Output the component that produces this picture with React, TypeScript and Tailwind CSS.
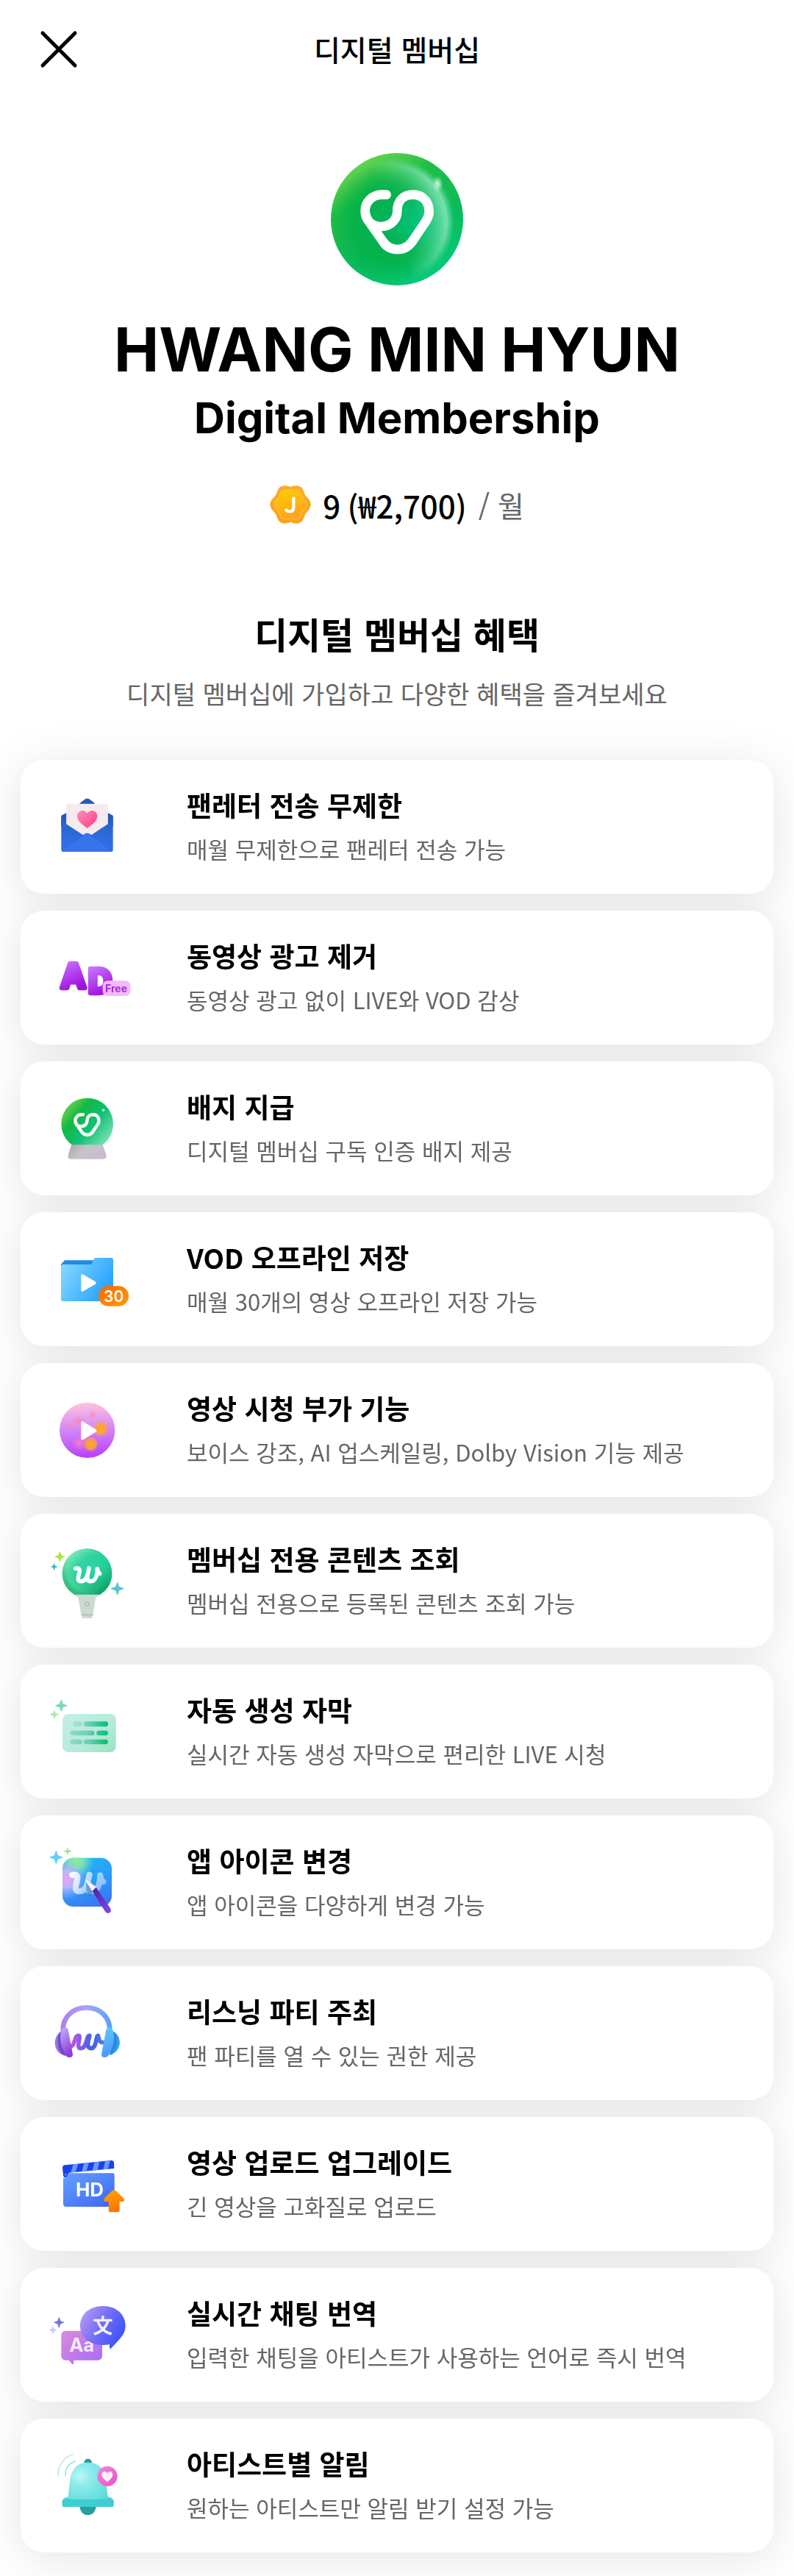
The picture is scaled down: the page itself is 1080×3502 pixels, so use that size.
import type { ReactNode } from 'react'

// Weverse-style heart mark, drawn on a 660 unit grid around (330, 335)
const HEART_MARK =
  'M287 224H268C228 224 200 254 200 290C200 330 230 354 264 354C310 354 331 320 331 290C331 250 355 224 395 224C440 224 461 258 461 292C461 308 456 320 448 332L394 412C378 436 358 447 333 447C305 447 286 436 272 414L212 328C204 316 200 305 200 290'

const W_MARK =
  'M188 847C201 843 207 850 204 862L200 880C197 895 202 899 210 899C226 899 234 888 238 868L243 846L238 868C232 894 240 899 250 899C268 899 277 878 277 848C279 860 283 866 287 868'

function Stop({ at, color, opacity = 1 }: { at: number; color: string; opacity?: number }) {
  return <stop offset={at} stopColor={color} stopOpacity={opacity} />
}

function Sparkle({ x, y, r, fill }: { x: number; y: number; r: number; fill: string }) {
  return (
    <path
      transform={`translate(${x} ${y}) scale(${r / 10})`}
      d="M0-10C1-10 2-4 3-3C4-2 10-1 10 0C10 1 4 2 3 3C2 4 1 10 0 10C-1 10-2 4-3 3C-4 2-10 1-10 0C-10-1-4-2-3-3C-2-4-1-10 0-10Z"
      fill={fill}
    />
  )
}

function Icon({ top, children }: { top: number; children: ReactNode }) {
  return (
    <svg className="size-[120px] shrink-0" viewBox={`54 ${top} 360 360`} aria-hidden="true">
      {children}
    </svg>
  )
}

function LetterIcon() {
  return (
    <Icon top={72}>
      <defs>
        <linearGradient id="letterHeart" x1="0" y1="0" x2="1" y2="1">
          <Stop at={0} color="#ff8fc4" />
          <Stop at={0.9} color="#fb4380" />
        </linearGradient>
        <linearGradient id="letterFront" x1="0" y1="0" x2="0" y2="1">
          <Stop at={0} color="#2762c8" />
          <Stop at={1} color="#3371ea" />
        </linearGradient>
      </defs>
      <path d="M130 212L228 139Q236 134 244 139L341 212V250H130Z" fill="#2459b5" />
      <path d="M125 130H205L205 159L130 212Z" fill="#fff" />
      <path d="M346 130H266L266 159L341 212Z" fill="#fff" />
      <path d="M130 206L151 195V250H130ZM341 206L320 195V250H341Z" fill="#2459b5" />
      <path d="M151 164Q151 158 157 158H314Q320 158 320 164V300H151Z" fill="#f5ebee" />
      <path d="M130 212L151 241L220 285H250L320 241L341 212V345Q341 354 332 354H139Q130 354 130 345Z" fill="url(#letterFront)" />
      <path d="M151 240L222 287H250L320 240V200H151Z" fill="#f5ebee" />
      <path d="M132 350L226 281Q236 274 246 281L340 350Q337 354 332 354H139Q134 354 132 350Z" fill="#3674ec" />
      <path d="M132 350L226 281M340 350L246 281" stroke="#2a60cc" strokeWidth="2" />
      <path d="M236 257C210 240 195 225 195 208C195 184 226 178 236 198C246 178 277 184 277 208C277 225 262 240 236 257Z" fill="url(#letterHeart)" />
    </Icon>
  )
}

function AdFreeIcon() {
  return (
    <Icon top={687}>
      <defs>
        <linearGradient id="adFill" x1="0" y1="0" x2="0.3" y2="1">
          <Stop at={0.1} color="#cc7dff" />
          <Stop at={0.9} color="#a112e0" />
        </linearGradient>
      </defs>
      <g className="font-['Inter',sans-serif] font-bold" fill="url(#adFill)" stroke="url(#adFill)" strokeWidth="19" strokeLinejoin="round">
        <text x="128" y="908" fontSize="136">A</text>
        <text x="240" y="931" fontSize="134">D</text>
      </g>
      <rect x="299" y="880" width="113" height="62" rx="20" fill="#f6b8ff" />
      <text className="font-['Inter',sans-serif] font-bold" x="354" y="926" fontSize="42" textAnchor="middle" fill="#a02fd6">
        Free
      </text>
    </Icon>
  )
}

function BadgeIcon() {
  return (
    <Icon top={102}>
      <defs>
        <linearGradient id="badgeBall" x1="0.1" y1="0.05" x2="0.95" y2="0.8">
          <Stop at={0} color="#80d94e" />
          <Stop at={0.3} color="#12b845" />
          <Stop at={0.6} color="#10bf72" />
          <Stop at={1} color="#7ee3b8" />
        </linearGradient>
        <linearGradient id="badgeStand" x1="0" y1="0" x2="1" y2="0.4">
          <Stop at={0} color="#aaa6ad" />
          <Stop at={0.5} color="#c6c4c6" />
          <Stop at={1} color="#c9bccf" />
        </linearGradient>
      </defs>
      <circle cx="236" cy="264" r="106" fill="url(#badgeBall)" />
      <path d="M172 349H299L313 388Q318 407 302 407H170Q153 407 159 388Z" fill="url(#badgeStand)" />
      <circle cx="302" cy="208" r="6" fill="#fff" opacity="0.6" />
      <path transform="translate(113 143) scale(0.37)" d={HEART_MARK} fill="none" stroke="#fff" strokeWidth="36" strokeLinecap="round" strokeLinejoin="round" />
    </Icon>
  )
}

function OfflineIcon() {
  return (
    <Icon top={717}>
      <defs>
        <linearGradient id="folder" x1="0" y1="0.2" x2="1" y2="0.7">
          <Stop at={0} color="#85d6ff" />
          <Stop at={1} color="#24a0ff" />
        </linearGradient>
        <linearGradient id="folderCount" x1="0" y1="0" x2="1" y2="1">
          <Stop at={0} color="#ff6500" />
          <Stop at={1} color="#ff9a00" />
        </linearGradient>
      </defs>
      <path d="M129 850V836L144 820H262V850Z" fill="#2089e4" />
      <path d="M129 846Q129 837 138 837H247Q256 837 259 825L262 816Q264 810 271 810H335Q342 810 342 817V979Q342 987 334 987H138Q129 987 129 978Z" fill="url(#folder)" />
      <path d="M211 884Q211 873 221 879L269 907Q276 912 269 917L221 946Q211 952 211 941Z" fill="#fff" />
      <rect x="282" y="925" width="123" height="82" rx="41" fill="url(#folderCount)" />
      <text className="font-['Inter',sans-serif] font-semibold" x="344" y="990" fontSize="63" textAnchor="middle" fill="#fff">
        30
      </text>
    </Icon>
  )
}

function PlayerIcon() {
  return (
    <Icon top={102}>
      <defs>
        <linearGradient id="player" x1="0.5" y1="0" x2="0.55" y2="1">
          <Stop at={0} color="#ffc4dd" />
          <Stop at={0.45} color="#d58bf5" />
          <Stop at={1} color="#b83dfb" />
        </linearGradient>
        <radialGradient id="playerGold">
          <Stop at={0.2} color="#ffa51e" />
          <Stop at={0.7} color="#fda53a" opacity={0.8} />
          <Stop at={1} color="#f6a06c" opacity={0} />
        </radialGradient>
        <radialGradient id="playerPink">
          <Stop at={0} color="#ff85b4" opacity={0.8} />
          <Stop at={1} color="#ff85b4" opacity={0} />
        </radialGradient>
      </defs>
      <circle cx="236" cy="283" r="113" fill="url(#player)" />
      <circle cx="200" cy="245" r="26" fill="url(#playerPink)" />
      <circle cx="258" cy="221" r="20" fill="url(#playerPink)" />
      <circle cx="166" cy="262" r="18" fill="url(#playerPink)" />
      <circle cx="205" cy="337" r="32" fill="url(#playerPink)" />
      <circle cx="291" cy="277" r="33" fill="url(#playerGold)" />
      <circle cx="250" cy="340" r="31" fill="url(#playerGold)" />
      <path d="M211 255Q211 243 221 249L271 280Q278 285 271 290L221 321Q211 327 211 315Z" fill="#fff" />
    </Icon>
  )
}

function LightStickIcon() {
  return (
    <Icon top={717}>
      <defs>
        <radialGradient id="stickBall" cx="0.62" cy="0.45" r="0.62">
          <Stop at={0} color="#27dba9" />
          <Stop at={0.5} color="#25cf9b" />
          <Stop at={0.85} color="#45d69c" />
          <Stop at={1} color="#35bb7c" />
        </radialGradient>
        <linearGradient id="stickShine" x1="0.1" y1="0.1" x2="0.8" y2="0.9">
          <Stop at={0} color="#c4ffd9" opacity={0.6} />
          <Stop at={0.5} color="#35d49c" opacity={0} />
          <Stop at={1} color="#009355" opacity={0.7} />
        </linearGradient>
      </defs>
      <path d="M180 952H291L270 967L258 1043Q257 1050 250 1050H222Q215 1050 213 1043L199 967Z" fill="#ccdbd1" />
      <path d="M212 1036H260" stroke="#a8b8ad" strokeWidth="4" />
      <circle cx="235" cy="992" r="8" fill="none" stroke="#9fb0a5" strokeWidth="3" />
      <path d="M183 953C153 936 134 904 134 868C134 811 179 766 236 766C292 766 337 811 337 868C337 904 318 936 288 953Z" fill="url(#stickBall)" />
      <path d="M183 953C153 936 134 904 134 868C134 811 179 766 236 766C292 766 337 811 337 868C337 904 318 936 288 953Z" fill="url(#stickShine)" />
      <path d={W_MARK} fill="none" stroke="#fff" strokeWidth="17" strokeLinecap="round" strokeLinejoin="round" />
      <Sparkle x={124} y={799} r={22} fill="#a6ea38" />
      <Sparkle x={101} y={840} r={14} fill="#32b9c8" />
      <Sparkle x={359} y={929} r={26} fill="#55c5cf" />
    </Icon>
  )
}

function CaptionIcon() {
  return (
    <Icon top={132}>
      <defs>
        <linearGradient id="captionCard" x1="0" y1="0" x2="1" y2="1">
          <Stop at={0} color="#c2f1e6" />
          <Stop at={0.6} color="#b6e9dc" />
          <Stop at={1} color="#98e6b9" />
        </linearGradient>
        <linearGradient id="captionLine" gradientUnits="userSpaceOnUse" x1="170" y1="0" x2="320" y2="0">
          <Stop at={0} color="#92d9c8" />
          <Stop at={0.45} color="#6ecfb7" />
          <Stop at={0.95} color="#0cc279" />
        </linearGradient>
      </defs>
      <rect x="135" y="240" width="218" height="156" rx="23" fill="url(#captionCard)" />
      <g fill="url(#captionLine)">
        <rect x="178" y="271" width="38" height="21" rx="10" opacity="0.5" />
        <rect x="222" y="271" width="99" height="21" rx="10" />
        <rect x="166" y="308" width="100" height="20" rx="10" />
        <rect x="273" y="308" width="48" height="20" rx="10" />
        <rect x="166" y="344" width="50" height="20" rx="10" />
        <rect x="222" y="344" width="99" height="20" rx="10" />
      </g>
      <Sparkle x={130} y={206} r={25} fill="#7edbb5" />
      <Sparkle x={102} y={242} r={18} fill="#a9e9a9" />
    </Icon>
  )
}

function AppIcon() {
  return (
    <Icon top={747}>
      <defs>
        <linearGradient id="appTile" x1="0.3" y1="0" x2="0.7" y2="1">
          <Stop at={0} color="#22b5f3" />
          <Stop at={0.5} color="#2a9df8" />
          <Stop at={1} color="#3b74f3" />
        </linearGradient>
        <radialGradient id="appGreen" gradientUnits="userSpaceOnUse" cx="190" cy="840" r="75">
          <Stop at={0} color="#8ef08c" />
          <Stop at={0.4} color="#8ef0a0" opacity={0.8} />
          <Stop at={1} color="#70e0d0" opacity={0} />
        </radialGradient>
        <radialGradient id="appPink" gradientUnits="userSpaceOnUse" cx="150" cy="915" r="85">
          <Stop at={0} color="#e9a4f8" />
          <Stop at={0.4} color="#d3b3fa" opacity={0.85} />
          <Stop at={1} color="#86b4ff" opacity={0} />
        </radialGradient>
        <linearGradient id="appMark" gradientUnits="userSpaceOnUse" x1="188" y1="840" x2="280" y2="905">
          <Stop at={0} color="#fff" opacity={0.95} />
          <Stop at={1} color="#b5d8ff" opacity={0.6} />
        </linearGradient>
        <linearGradient id="appPen" x1="0" y1="0" x2="1" y2="1">
          <Stop at={0} color="#4a20a8" />
          <Stop at={1} color="#8448ef" />
        </linearGradient>
      </defs>
      <rect x="135" y="827" width="201" height="199" rx="44" fill="url(#appTile)" />
      <rect x="135" y="827" width="201" height="199" rx="44" fill="url(#appGreen)" />
      <rect x="135" y="827" width="201" height="199" rx="44" fill="url(#appPink)" />
      <path transform="translate(-66 -187) scale(1.28)" d={W_MARK} fill="none" stroke="url(#appMark)" strokeWidth="19" strokeLinecap="round" strokeLinejoin="round" />
      <path d="M232 925L232 960L250 990L258 962Z" fill="#276fa0" opacity="0.5" />
      <path d="M231 923Q229 914 238 920L272 946L257 964Z" fill="#f7f5fb" />
      <path d="M257 963L271 948Q275 951 277 955L331 1034Q336 1046 327 1051Q317 1056 310 1047Z" fill="url(#appPen)" />
      <Sparkle x={109} y={825} r={27} fill="#5fd0f8" />
      <Sparkle x={156} y={800} r={16} fill="#9de5a4" />
    </Icon>
  )
}

function HeadphoneIcon() {
  return (
    <Icon top={132}>
      <defs>
        <linearGradient id="band" x1="0" y1="0" x2="1" y2="0">
          <Stop at={0} color="#ab82ee" />
          <Stop at={0.5} color="#a9a5f6" />
          <Stop at={1} color="#5ba3f6" />
        </linearGradient>
        <linearGradient id="cupLeft" x1="0" y1="0" x2="0.4" y2="1">
          <Stop at={0} color="#c7b2fb" />
          <Stop at={1} color="#8c3ed8" />
        </linearGradient>
        <linearGradient id="cupRight" x1="0.3" y1="0" x2="0.5" y2="1">
          <Stop at={0} color="#58cdfc" />
          <Stop at={1} color="#5192fa" />
        </linearGradient>
        <linearGradient id="phoneMark" x1="0" y1="0" x2="1" y2="0">
          <Stop at={0} color="#d44ed5" />
          <Stop at={0.25} color="#8d5cf4" />
          <Stop at={0.65} color="#3f62dc" />
          <Stop at={1} color="#5779e6" />
        </linearGradient>
      </defs>
      <path d="M137 305C131 176 334 176 328 305" fill="none" stroke="url(#band)" strokeWidth="20" />
      <path d="M168 366C185 366 184 322 199 322C216 322 185 374 210 374C236 374 231 322 245 322C249 322 224 374 252 374C276 374 270 322 280 322C284 322 278 354 305 350" fill="none" stroke="url(#phoneMark)" strokeWidth="17" strokeLinecap="round" strokeLinejoin="round" />
      <path d="M134 302C94 318 91 392 146 404Z" fill="#9276e8" />
      <path d="M132 303C108 318 110 390 144 404L160 395L138 300Z" fill="#7546cf" />
      <path d="M127 315Q130 289 146 289Q158 289 159 303L177 399Q177 411 164 411Q151 411 146 398C130 370 124 342 127 315Z" fill="url(#cupLeft)" />
      <path d="M337 302C379 318 382 386 327 402Z" fill="#359ff1" />
      <path d="M339 303C366 318 363 384 329 401Z" fill="#278be0" />
      <path d="M344 315Q342 289 325 289Q314 289 312 303L294 399Q294 411 307 411Q319 411 325 398C341 370 348 342 344 315Z" fill="url(#cupRight)" />
    </Icon>
  )
}

function UploadIcon() {
  return (
    <Icon top={747}>
      <defs>
        <linearGradient id="clap" x1="0" y1="0" x2="1" y2="1">
          <Stop at={0} color="#62a1ff" />
          <Stop at={1} color="#3f63f5" />
        </linearGradient>
        <linearGradient id="upArrow" x1="0.2" y1="0" x2="0.6" y2="1">
          <Stop at={0} color="#ffa500" />
          <Stop at={1} color="#ff7000" />
        </linearGradient>
      </defs>
      <path d="M135 862Q134 851 146 850L333 831Q344 830 345 840L346 864L162 881L153 900Q140 904 138 892Z" fill="#1743ec" />
      <path d="M179 847L199 845L189 878L169 880ZM223 842L243 840L233 874L214 876ZM266 838L286 836L278 870L257 872ZM309 834L330 832L320 866L301 868Z" fill="#6a96ff" />
      <path d="M138 902H152L164 883H339Q347 883 347 891V1012Q347 1020 339 1020H150Q138 1020 138 1009Z" fill="url(#clap)" />
      <circle cx="148" cy="889" r="4" fill="#6a96ff" />
      <text className="font-['Inter',sans-serif] font-bold" x="246" y="978" fontSize="78" textAnchor="middle" fill="#fff">
        HD
      </text>
      <path d="M338 954Q345 949 352 954L384 985Q393 998 379 999H368V1035Q368 1042 361 1042H330Q323 1042 323 1035V999H311Q298 998 307 985Z" fill="url(#upArrow)" />
    </Icon>
  )
}

function TranslateIcon() {
  return (
    <Icon top={132}>
      <defs>
        <linearGradient id="bubbleBack" x1="0" y1="0" x2="1" y2="1">
          <Stop at={0} color="#da8bdc" />
          <Stop at={1} color="#a66af7" />
        </linearGradient>
        <linearGradient id="bubbleFront" x1="0" y1="0.2" x2="0.9" y2="0.7">
          <Stop at={0} color="#b79af3" />
          <Stop at={0.5} color="#766ff5" />
          <Stop at={1} color="#4055fa" />
        </linearGradient>
      </defs>
      <path d="M150 296H278Q297 296 297 315V397Q297 416 278 416H181L180 430Q179 435 174 431L161 416H150Q130 416 130 397V315Q130 296 150 296Z" fill="url(#bubbleBack)" />
      <text className="font-['Inter',sans-serif] font-bold" x="214" y="381" fontSize="76" textAnchor="middle" fill="#f7e9ff">
        Aa
      </text>
      <path d="M300 195C355 195 392 229 392 276C392 300 378 319 366 332L334 367Q327 372 327 362V351Q315 354 300 354C245 354 207 321 207 276C207 229 245 195 300 195Z" fill="url(#bubbleFront)" />
      <text className="font-['Noto_Sans_CJK_SC',sans-serif] font-bold" x="300" y="305" fontSize="82" textAnchor="middle" fill="#edf0ff">
        文
      </text>
      <Sparkle x={121} y={262} r={22} fill="#7972dc" />
      <Sparkle x={96} y={293} r={16} fill="#c9c9fa" />
    </Icon>
  )
}

function BellIcon() {
  return (
    <Icon top={747}>
      <defs>
        <radialGradient id="bellBody" cx="0.35" cy="0.3" r="0.85">
          <Stop at={0} color="#bdf8f7" />
          <Stop at={0.25} color="#8eecec" />
          <Stop at={1} color="#4cd3d5" />
        </radialGradient>
        <linearGradient id="bellHeart" x1="0" y1="0" x2="1" y2="1">
          <Stop at={0} color="#f785dd" />
          <Stop at={1} color="#e950c8" />
        </linearGradient>
      </defs>
      <path d="M117 889C115 845 140 812 178 799" fill="none" stroke="#b4efee" strokeWidth="5" strokeLinecap="round" />
      <path d="M147 887C146 855 162 836 187 828" fill="none" stroke="#96e6e6" strokeWidth="5" strokeLinecap="round" />
      <path d="M223 835Q223 818 239 818Q255 818 255 835Z" fill="#279fa1" />
      <path d="M205 1010H272C270 1060 207 1060 205 1010Z" fill="#279fa1" />
      <path d="M239 833C291 833 310 868 314 919L320 973Q344 977 344 994V1004Q344 1014 334 1014H144Q134 1014 134 1004V994Q134 977 158 973L164 919C168 868 187 833 239 833Z" fill="url(#bellBody)" />
      <path d="M134 993Q136 980 154 979Q158 984 168 984H310Q320 984 324 979Q342 980 344 993V1004Q344 1014 334 1014H144Q134 1014 134 1004Z" fill="#3ecdd0" />
      <circle cx="318" cy="889" r="41" fill="url(#bellHeart)" />
      <path d="M318 912C302 900 295 892 295 883C295 869 312 866 318 877C324 866 340 869 340 883C340 892 334 900 318 912Z" fill="#fff0fa" />
    </Icon>
  )
}

function MembershipBadge() {
  return (
    <svg className="size-[180px]" viewBox="60 54 540 540" role="img" aria-label="Digital Membership">
      <defs>
        <linearGradient id="heroBase" x1="0.2" y1="0" x2="0.75" y2="1">
          <Stop at={0} color="#76da54" />
          <Stop at={0.3} color="#20bd45" />
          <Stop at={0.65} color="#0abb5c" />
          <Stop at={1} color="#04cb7c" />
        </linearGradient>
        <radialGradient id="heroCore" gradientUnits="userSpaceOnUse" cx="310" cy="335" r="248">
          <Stop at={0} color="#02b45c" />
          <Stop at={0.65} color="#02b048" opacity={0.8} />
          <Stop at={1} color="#02b048" opacity={0} />
        </radialGradient>
        <radialGradient id="heroRim" gradientUnits="userSpaceOnUse" cx="300" cy="335" r="265">
          <Stop at={0.4} color="#7fe8b8" opacity={0} />
          <Stop at={0.88} color="#90e9c2" opacity={0.8} />
          <Stop at={1} color="#5fdda5" opacity={0} />
        </radialGradient>
        <linearGradient id="heroSide" gradientUnits="userSpaceOnUse" x1="320" y1="380" x2="520" y2="310">
          <Stop at={0} color="#000" />
          <Stop at={1} color="#fff" />
        </linearGradient>
        <mask id="heroMask">
          <rect x="60" y="54" width="540" height="540" fill="url(#heroSide)" />
        </mask>
        <radialGradient id="heroMiddle" gradientUnits="userSpaceOnUse" cx="425" cy="330" r="140">
          <Stop at={0} color="#05c581" />
          <Stop at={1} color="#05c581" opacity={0} />
        </radialGradient>
        <radialGradient id="heroSpot">
          <Stop at={0} color="#e4ffec" opacity={0.9} />
          <Stop at={1} color="#c0f5d8" opacity={0} />
        </radialGradient>
      </defs>
      <circle cx="330" cy="324" r="270" fill="url(#heroBase)" />
      <circle cx="330" cy="324" r="270" fill="url(#heroCore)" />
      <circle cx="330" cy="324" r="270" fill="url(#heroMiddle)" />
      <circle cx="330" cy="324" r="270" fill="url(#heroRim)" mask="url(#heroMask)" />
      <ellipse cx="496" cy="180" rx="22" ry="34" fill="url(#heroSpot)" />
      <path d={HEART_MARK} fill="none" stroke="#fff" strokeWidth="38" strokeLinecap="round" strokeLinejoin="round" />
    </svg>
  )
}

function JellyCoin() {
  const edge =
    'M115 60Q128 60 141 64Q154 60 168 60Q190 62 196 84Q199 98 210 108Q224 122 225 137Q224 153 210 167Q199 177 196 191Q190 213 168 215Q154 215 141 209Q128 215 115 215Q93 213 87 191Q84 177 73 167Q58 153 57 137Q58 122 73 108Q84 98 87 84Q93 62 115 60Z'
  return (
    <svg className="h-[52px] w-14" viewBox="57 59 168 157" aria-hidden="true">
      <defs>
        <linearGradient id="coinEdge" x1="0" y1="0" x2="0" y2="1">
          <Stop at={0} color="#fbad22" />
          <Stop at={1} color="#ffa01c" />
        </linearGradient>
        <linearGradient id="coinFace" x1="0" y1="0" x2="0.3" y2="1">
          <Stop at={0} color="#ffce00" />
          <Stop at={1} color="#ffa31d" />
        </linearGradient>
      </defs>
      <path d={edge} fill="url(#coinEdge)" />
      <path transform="translate(31 30) scale(0.78)" d={edge} fill="url(#coinFace)" stroke="#ffc145" strokeWidth="5" />
      <path d="M154 112V149Q154 166 139 166Q129 166 124 160" fill="none" stroke="#fff" strokeWidth="13" strokeLinecap="round" />
    </svg>
  )
}

const benefits = [
  { title: '팬레터 전송 무제한', detail: '매월 무제한으로 팬레터 전송 가능', icon: LetterIcon },
  { title: '동영상 광고 제거', detail: '동영상 광고 없이 LIVE와 VOD 감상', icon: AdFreeIcon },
  { title: '배지 지급', detail: '디지털 멤버십 구독 인증 배지 제공', icon: BadgeIcon },
  { title: 'VOD 오프라인 저장', detail: '매월 30개의 영상 오프라인 저장 가능', icon: OfflineIcon },
  { title: '영상 시청 부가 기능', detail: '보이스 강조, AI 업스케일링, Dolby Vision 기능 제공', icon: PlayerIcon },
  { title: '멤버십 전용 콘텐츠 조회', detail: '멤버십 전용으로 등록된 콘텐츠 조회 가능', icon: LightStickIcon },
  { title: '자동 생성 자막', detail: '실시간 자동 생성 자막으로 편리한 LIVE 시청', icon: CaptionIcon },
  { title: '앱 아이콘 변경', detail: '앱 아이콘을 다양하게 변경 가능', icon: AppIcon },
  { title: '리스닝 파티 주최', detail: '팬 파티를 열 수 있는 권한 제공', icon: HeadphoneIcon },
  { title: '영상 업로드 업그레이드', detail: '긴 영상을 고화질로 업로드', icon: UploadIcon },
  { title: '실시간 채팅 번역', detail: '입력한 채팅을 아티스트가 사용하는 언어로 즉시 번역', icon: TranslateIcon },
  { title: '아티스트별 알림', detail: '원하는 아티스트만 알림 받기 설정 가능', icon: BellIcon },
]

export default function App() {
  return (
    <div lang="ko" className="bg-white pb-8 font-['Noto_Sans_CJK_KR',sans-serif] text-black">
      <header className="flex h-33 items-center px-12">
        <button type="button" aria-label="닫기" className="size-16">
          <svg viewBox="0 0 64 64" fill="none" stroke="currentColor" strokeWidth="5" strokeLinecap="round">
            <path d="M10 11L54 55M54 11L10 55" />
          </svg>
        </button>
        <h1 className="flex-1 text-center text-[39px] font-medium">디지털 멤버십</h1>
        <div className="w-16" />
      </header>

      <main>
        <section className="flex flex-col items-center pt-[76px]">
          <MembershipBadge />
          <h2 className="mt-10 text-center font-['Inter',sans-serif] font-bold">
            <span className="block text-[82px] leading-[96px]">HWANG MIN HYUN</span>
            <span className="mt-1 block text-[58px] leading-[80px]">Digital Membership</span>
          </h2>
          <p className="mt-[50px] flex h-14 items-center font-medium">
            <JellyCoin />
            <span className="ml-4 text-[42px]">9 (₩2,700)</span>
            <span className="ml-4 text-[39px] font-normal text-[#666]">/ 월</span>
          </p>
        </section>

        <section className="mt-[111px]">
          <h2 className="text-center text-[49px] leading-[72px] font-bold">디지털 멤버십 혜택</h2>
          <p className="mt-5 text-center text-[34px] leading-[52px] text-[#666]">
            디지털 멤버십에 가입하고 다양한 혜택을 즐겨보세요
          </p>

          <ul className="mx-7 mt-16 flex flex-col gap-[23px] drop-shadow-[0_8px_30px_rgba(0,0,0,0.1)]">
            {benefits.map(({ title, detail, icon: BenefitIcon }) => (
              <li key={title} className="flex h-[182px] items-center gap-[76px] rounded-[32px] bg-white px-[30px]">
                <BenefitIcon />
                <div className="leading-[59px]">
                  <h3 className="text-[37px] font-bold">{title}</h3>
                  <p className="text-[31px] text-[#666]">{detail}</p>
                </div>
              </li>
            ))}
          </ul>
        </section>
      </main>
    </div>
  )
}
